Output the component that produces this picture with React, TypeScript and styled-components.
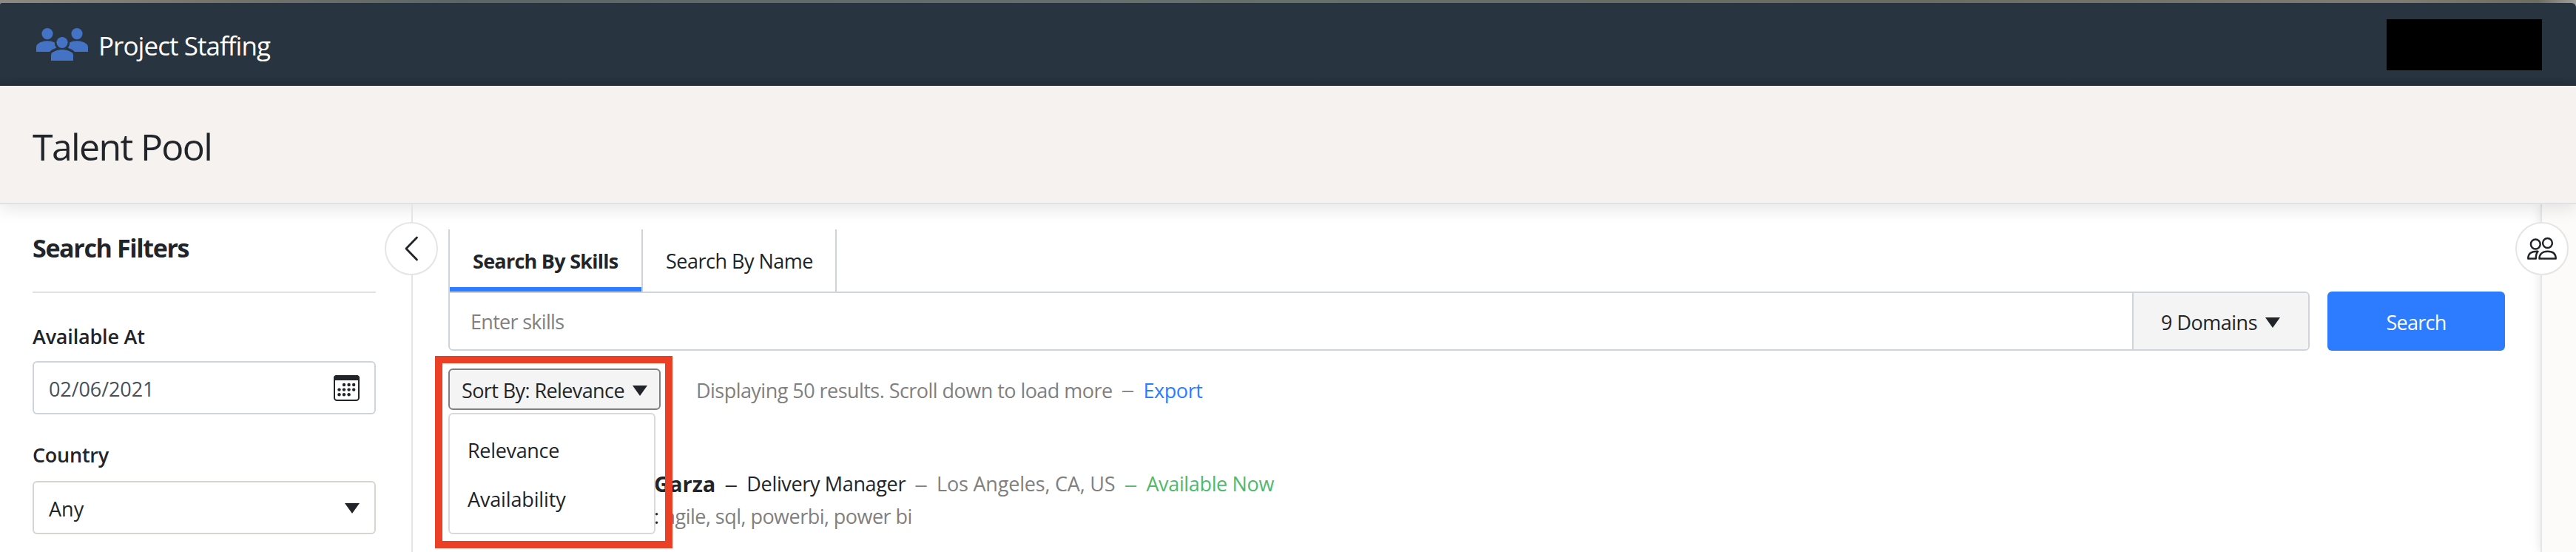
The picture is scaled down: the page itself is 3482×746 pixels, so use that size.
import React from "react";
import styled, { createGlobalStyle } from "styled-components";

const ink = "#212529";
const muted = "#808080";
const blue = "#2d7cff";
const green = "#50b96b";
const line = "#ced4da";

const GlobalStyle = createGlobalStyle`
  *, *::before, *::after { box-sizing: border-box; }
  body {
    margin: 0;
    overflow: hidden;
    background: #fff;
    color: ${ink};
    font-family: "Open Sans", "Noto Sans", sans-serif;
    font-size: 27px;
    line-height: 37px;
  }
  button, input { font: inherit; color: inherit; }
`;

const Page = styled.div`
  display: flex;
  flex-direction: column;
  height: 746px;
  overflow: hidden;
`;

const Text = styled.span<{ $track?: number; $color?: string }>`
  white-space: pre;
  letter-spacing: ${(p) => p.$track ?? 0}px;
  color: ${(p) => p.$color ?? "inherit"};
`;

/* Header */
const Backdrop = styled.div`
  padding-top: 4px;
  background: linear-gradient(90deg, #8b8982 0, #77756d 260px, #5c6664 620px, #65706c 1500px, #6a6c62 2600px, #807c73 3240px, #6d6c60 3430px, #a09e9b 3482px);
`;

const TopBar = styled.header`
  display: flex;
  align-items: center;
  justify-content: space-between;
  height: 112px;
  padding: 0 46px 0 49px;
  border-radius: 3px 6px 0 0;
  background: linear-gradient(#283440 88%, #26303d);
`;

const Brand = styled.div`
  display: flex;
  align-items: center;
  gap: 14px;
  color: #fff;
  font-size: 35px;
  line-height: 48px;
`;

const BrandName = styled(Text)`
  padding-top: 3px;
`;

const Account = styled.div`
  width: 210px;
  height: 69px;
  margin-top: 1px;
  background: #000;
`;

const TitleBand = styled.div`
  position: relative;
  z-index: 2;
  display: flex;
  align-items: center;
  height: 160px;
  padding: 6px 44px 0;
  border-bottom: 2px solid #dee2e6;
  background: #f5f2ef;
  box-shadow: 0 8px 20px rgba(0, 0, 0, 0.09);
`;

const Title = styled.h1`
  margin: 0;
  font-size: 50px;
  font-weight: 400;
  line-height: 68px;
`;

/* Body */
const Body = styled.div`
  display: flex;
  flex: 1;
  min-height: 0;
`;

const Sidebar = styled.aside`
  position: relative;
  z-index: 3;
  width: 558px;
  padding: 0 48px 0 44px;
  border-right: 2px solid #e5e5e5;
`;

const SidebarHead = styled.h2`
  display: flex;
  align-items: center;
  height: 120px;
  margin: 0 0 40px;
  border-bottom: 2px solid #dee2e6;
  font-size: 34px;
  font-weight: 700;
`;

const Field = styled.div<{ $gap: number }>`
  display: flex;
  flex-direction: column;
  gap: ${(p) => p.$gap}px;
  margin-bottom: 36px;
`;

const FieldLabel = styled.label`
  font-weight: 600;
`;

const Control = styled.div<{ $border: string }>`
  display: flex;
  align-items: center;
  justify-content: space-between;
  height: 72px;
  padding: 3px 20px 0 20px;
  border: 2px solid ${(p) => p.$border};
  border-radius: 6px;

  svg { margin-top: -2px; }
`;

const RoundButton = styled.button<{ $side: "left" | "right" }>`
  position: absolute;
  top: 24px;
  ${(p) => (p.$side === "left" ? "right: -36px;" : "left: -36px;")}
  display: flex;
  align-items: center;
  justify-content: center;
  width: 72px;
  height: 72px;
  padding: 0;
  border: 2px solid #e5e5e5;
  border-radius: 50%;
  background: #fff;
`;

const Main = styled.main`
  flex: 1;
  padding: 34px 48px 0;
`;

const Tabs = styled.div`
  display: flex;
  height: 84px;
`;

const Tab = styled.div<{ $active?: boolean }>`
  display: flex;
  align-items: center;
  width: ${(p) => (p.$active ? 263 : 262)}px;
  padding-left: 31px;
  border: solid ${line};
  border-width: ${(p) => (p.$active ? "0 2px" : "0 2px 0 0")};
  font-weight: ${(p) => (p.$active ? 700 : 400)};
  box-shadow: ${(p) => (p.$active ? `inset 0 -6px ${blue}` : "none")};
`;

const SearchRow = styled.div`
  display: flex;
  gap: 24px;
  height: 80px;
`;

const SearchGroup = styled.div`
  display: flex;
  flex: 1;
  overflow: hidden;
  border: 2px solid ${line};
  border-radius: 0 6px 6px 6px;
`;

const SkillInput = styled.div`
  display: flex;
  flex: 1;
  align-items: center;
  padding-left: 28px;
`;

const Domains = styled.div`
  display: flex;
  align-items: center;
  gap: 11px;
  width: 238px;
  padding: 3px 0 0 37px;
  border-left: 2px solid ${line};
  background: #f4f4f4;
`;

const SearchButton = styled.button`
  width: 240px;
  padding: 3px 0 0;
  border: 0;
  border-radius: 6px;
  background: ${blue};
  color: #fff;
`;

const ResultBar = styled.div`
  display: flex;
  height: 56px;
  margin-top: 24px;
`;

const SortBox = styled.div`
  position: relative;
  width: 287px;
`;

const SortButton = styled.button`
  display: flex;
  align-items: center;
  justify-content: space-between;
  width: 100%;
  height: 56px;
  padding: 3px 16px 0;
  border: 2px solid ${muted};
  border-radius: 6px;
  background: #f4f4f4;
`;

const Menu = styled.div`
  position: absolute;
  z-index: 4;
  top: 60px;
  left: 0;
  width: 280px;
  height: 164px;
  padding: 15px 24px;
  border: 2px solid #d9d9d9;
  border-radius: 6px;
  background: #fff;
`;

const MenuItem = styled.div`
  display: flex;
  align-items: center;
  height: 66px;
`;

const Highlight = styled.div`
  position: absolute;
  z-index: 5;
  top: -17px;
  left: -18px;
  width: 321px;
  height: 260px;
  border: 10px solid #eb4026;
`;

const Summary = styled.div`
  display: flex;
  align-items: center;
  padding: 3px 0 0 48px;
  color: ${muted};
`;

const Dash = styled.span<{ $color?: string; $lift?: number }>`
  margin: 0 12px;
  color: ${(p) => p.$color ?? "inherit"};
  font-size: 36px;
  font-weight: 300;
  line-height: 37px;
  transform: translateY(${(p) => -(p.$lift ?? 0)}px);
`;

const Result = styled.article`
  display: flex;
  flex-direction: column;
  gap: 4px;
  padding: 79px 0 0 278px;
`;

const ResultLine = styled.div`
  display: flex;
  align-items: center;
  height: 40px;
`;

const PersonName = styled(Text)`
  font-size: 29px;
  font-weight: 700;
`;

const RightPanel = styled.aside`
  position: relative;
  z-index: 1;
  width: 48px;
  border-left: 2px solid #e5e5e5;
  background: #fcfbfa;
  box-shadow: 0 0 16px rgba(0, 0, 0, 0.1);
`;

const Triangle = () => (
  <svg width="20" height="14" viewBox="0 0 20 14">
    <path d="M0 0H20L10 14Z" fill={ink} />
  </svg>
);

const StaffingLogo = () => (
  <svg width="70" height="44" viewBox="0 0 70 44" fill="#4472c4">
    <circle cx="15" cy="7.6" r="7.6" />
    <circle cx="55" cy="7.6" r="7.6" />
    <path d="M0 32V25.5Q0 22.5 2.5 21Q8 17.3 15 17.3Q20.5 17.3 24.7 19.3Q24.7 24 27.2 26.8Q21.5 28.3 18 32Z" />
    <path d="M70 32V25.5Q70 22.5 67.5 21Q62 17.3 55 17.3Q49.5 17.3 45.3 19.3Q45.3 24 42.8 26.8Q48.5 28.3 52 32Z" />
    <circle cx="35" cy="19.5" r="7.6" />
    <path d="M20 44V36.5Q20 34 22 32.8Q28 29 35 29T48 32.8Q50 34 50 36.5V44Z" />
  </svg>
);

const CalendarIcon = () => (
  <svg width="35" height="35" viewBox="0 0 35 35" fill={ink}>
    <rect x="1" y="1" width="33" height="33" rx="3.5" fill="none" stroke={ink} strokeWidth="2" />
    <path d="M0 7V4Q0 0 4 0H31Q35 0 35 4V7Z" />
    {[
      [14, 13], [20.6, 13], [27.2, 13],
      [7.5, 19.6], [14, 19.6], [20.6, 19.6], [27.2, 19.6],
      [7.5, 26.2], [14, 26.2], [20.6, 26.2],
    ].map(([x, y]) => (
      <circle key={`${x}-${y}`} cx={x} cy={y} r="2.2" />
    ))}
  </svg>
);

const ChevronIcon = () => (
  <svg width="20" height="36" viewBox="0 0 20 36" fill="none" stroke={ink} strokeWidth="2.8" strokeLinecap="round" strokeLinejoin="round">
    <path d="M17.5 3L3 18L17.5 33" />
  </svg>
);

const PeopleIcon = () => (
  <svg width="40" height="32" viewBox="0 0 40 32" fill="none" stroke={ink} strokeWidth="2.5" strokeLinejoin="round">
    <circle cx="11.3" cy="10" r="6.4" />
    <circle cx="27.5" cy="8.5" r="6.4" />
    <path d="M16.5 29.5C16.5 23.5 20.5 19.8 27.7 19.8S38.7 23.5 38.7 29.5Z" />
    <path d="M14.5 19.8C6 19.3 1.3 22.5 1.3 29.5H11.8C11.8 25.5 12.3 22 14.5 19.8Z" />
  </svg>
);

export default function App() {
  return (
    <Page>
      <GlobalStyle />
      <Backdrop>
        <TopBar>
          <Brand>
            <StaffingLogo />
            <BrandName $track={-0.95}>Project Staffing</BrandName>
          </Brand>
          <Account />
        </TopBar>
      </Backdrop>
      <TitleBand>
        <Title><Text $track={-1.65}>Talent Pool</Text></Title>
      </TitleBand>
      <Body>
        <Sidebar>
          <SidebarHead><Text $track={-1.35}>Search Filters</Text></SidebarHead>
          <Field $gap={15}>
            <FieldLabel><Text $track={-0.2}>Available At</Text></FieldLabel>
            <Control $border={line}>
              <Text $track={-0.1} $color="#495057">02/06/2021</Text>
              <CalendarIcon />
            </Control>
          </Field>
          <Field $gap={17}>
            <FieldLabel><Text $track={-0.25}>Country</Text></FieldLabel>
            <Control $border="#d8d4d0">
              <Text>Any</Text>
              <Triangle />
            </Control>
          </Field>
          <RoundButton $side="left" aria-label="Collapse filters">
            <ChevronIcon />
          </RoundButton>
        </Sidebar>
        <Main>
          <Tabs>
            <Tab $active><Text $track={-0.74}>Search By Skills</Text></Tab>
            <Tab><Text $track={-0.5}>Search By Name</Text></Tab>
          </Tabs>
          <SearchRow>
            <SearchGroup>
              <SkillInput><Text $track={-0.7} $color={muted}>Enter skills</Text></SkillInput>
              <Domains>
                <Text $track={-0.5}>9 Domains</Text>
                <Triangle />
              </Domains>
            </SearchGroup>
            <SearchButton><Text $track={-0.75}>Search</Text></SearchButton>
          </SearchRow>
          <ResultBar>
            <SortBox>
              <SortButton>
                <Text $track={-0.6}>Sort By: Relevance</Text>
                <Triangle />
              </SortButton>
              <Menu>
                <MenuItem><Text $track={-0.33}>Relevance</Text></MenuItem>
                <MenuItem><Text $track={-0.15}>Availability</Text></MenuItem>
              </Menu>
              <Highlight />
            </SortBox>
            <Summary>
              <Text $track={-0.54}>Displaying 50 results. Scroll down to load more</Text>
              <Dash $lift={2}>–</Dash>
              <Text $track={-0.45} $color={blue}>Export</Text>
            </Summary>
          </ResultBar>
          <Result>
            <ResultLine>
              <PersonName>Garza</PersonName>
              <Dash>–</Dash>
              <Text $track={-0.35}>Delivery Manager</Text>
              <Dash $color={muted}>–</Dash>
              <Text $track={-0.2} $color={muted}>Los Angeles, CA, US</Text>
              <Dash $color={green}>–</Dash>
              <Text $track={-0.35} $color={green}>Available Now</Text>
            </ResultLine>
            <ResultLine>
              <Text>: </Text>
              <Text $track={-0.53} $color={muted}>agile, sql, powerbi, power bi</Text>
            </ResultLine>
          </Result>
        </Main>
        <RightPanel>
          <RoundButton $side="right" aria-label="Open team panel">
            <PeopleIcon />
          </RoundButton>
        </RightPanel>
      </Body>
    </Page>
  );
}
